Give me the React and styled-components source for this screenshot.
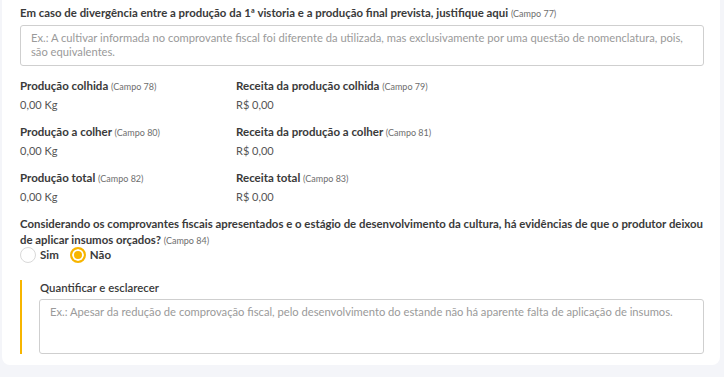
import React from 'react'
import styled, { createGlobalStyle } from 'styled-components'

const GlobalStyle = createGlobalStyle`
  html, body {
    margin: 0;
    padding: 0;
    background: #f4f5f9;
    font-family: Lato, "Open Sans", sans-serif;
  }
`

const fields = [
  [
    { label: 'Produção colhida', campo: 78, value: '0,00 Kg' },
    { label: 'Receita da produção colhida', campo: 79, value: 'R$ 0,00' },
  ],
  [
    { label: 'Produção a colher', campo: 80, value: '0,00 Kg' },
    { label: 'Receita da produção a colher', campo: 81, value: 'R$ 0,00' },
  ],
  [
    { label: 'Produção total', campo: 82, value: '0,00 Kg' },
    { label: 'Receita total', campo: 83, value: 'R$ 0,00' },
  ],
]

function Radio({ checked, label }) {
  return (
    <RadioLabel>
      <RadioCircle checked={checked} />
      {label}
    </RadioLabel>
  )
}

function App() {
  return (
    <Page>
      <GlobalStyle />
      <Card>
        <Label>
          Em caso de divergência entre a produção da 1ª vistoria e a produção final prevista, justifique aqui{' '}
          <Campo>(Campo 77)</Campo>
        </Label>
        <TextArea
          rows={2}
          height={41}
          placeholder='Ex.: A cultivar informada no comprovante fiscal foi diferente da utilizada, mas exclusivamente por uma questão de nomenclatura, pois, são equivalentes.'
        />

        <Grid>
          {fields.map((row) =>
            row.map((f) => (
              <Field key={f.campo}>
                <FieldLabel>
                  {f.label} <Campo>(Campo {f.campo})</Campo>
                </FieldLabel>
                <Value>{f.value}</Value>
              </Field>
            ))
          )}
        </Grid>

        <Question>
          Considerando os comprovantes fiscais apresentados e o estágio de desenvolvimento da cultura, há evidências de que o produtor deixou de aplicar insumos orçados?{' '}
          <Campo>(Campo 84)</Campo>
        </Question>
        <Radios>
          <Radio label='Sim' />
          <Radio checked label='Não' />
        </Radios>

        <Nested>
          <SubLabel>Quantificar e esclarecer</SubLabel>
          <TextArea
            height={55}
            placeholder='Ex.: Apesar da redução de comprovação fiscal, pelo desenvolvimento do estande não há aparente falta de aplicação de insumos.'
          />
        </Nested>
      </Card>
    </Page>
  )
}

const Page = styled.div`
  width: 724px;
  height: 377px;
  box-sizing: border-box;
  padding: 0 4px 0 2px;
  background: #f4f5f9;
`

const Card = styled.div`
  background: #fff;
  border-radius: 0 0 8px 8px;
  padding: 5px 16px 11px 18px;
  color: #3b3b3b;
`

const Label = styled.div`
  font-size: 11.4px;
  font-weight: 700;
  line-height: 16px;
  color: #3a3a3a;
  margin-bottom: 4px;
`

const Campo = styled.span`
  font-size: 9px;
  font-weight: 400;
  line-height: 1;
  color: #6e6e6e;
`

const TextArea = styled.textarea`
  display: block;
  width: 100%;
  box-sizing: border-box;
  height: ${(p) => p.height}px;
  resize: none;
  border: 1px solid #cfcfcf;
  border-radius: 3px;
  padding: 5px 10px;
  font-family: inherit;
  font-size: 11.2px;
  line-height: 14px;
  color: #444;
  outline: none;

  &::placeholder {
    color: #9a9a9a;
  }
`

const Grid = styled.div`
  display: grid;
  grid-template-columns: 216px 1fr;
  row-gap: 11px;
  margin-top: 12px;
`

const Field = styled.div`
  display: flex;
  flex-direction: column;
  gap: 3px;
`

const FieldLabel = styled.div`
  font-size: 11.5px;
  font-weight: 700;
  line-height: 16px;
  color: #3a3a3a;
`

const Value = styled.div`
  font-size: 11px;
  line-height: 16px;
  color: #555;
`

const Question = styled(Label)`
  margin: 11px 0 0;
`

const Radios = styled.div`
  display: flex;
  gap: 11px;
  margin-top: -2px;
`

const RadioLabel = styled.label`
  display: flex;
  align-items: center;
  gap: 4px;
  font-size: 11.5px;
  font-weight: 700;
  color: #3a3a3a;
  line-height: 18px;
`

const RadioCircle = styled.span`
  width: 16px;
  height: 16px;
  box-sizing: border-box;
  border-radius: 50%;
  border: ${(p) => (p.checked ? '2px solid #f7b500' : '1px solid #d9d9d9')};
  background: ${(p) => (p.checked ? '#f7b500' : '#fff')};
  box-shadow: ${(p) => (p.checked ? 'inset 0 0 0 2px #fff' : 'none')};
`

const Nested = styled.div`
  margin-top: 16px;
  border-left: 2px solid #f7b500;
  padding: 0 0 0 17px;
`

const SubLabel = styled.div`
  font-size: 11.4px;
  font-weight: 600;
  line-height: 16px;
  color: #3a3a3a;
  margin: 0 0 3px 1px;
`

export default App
